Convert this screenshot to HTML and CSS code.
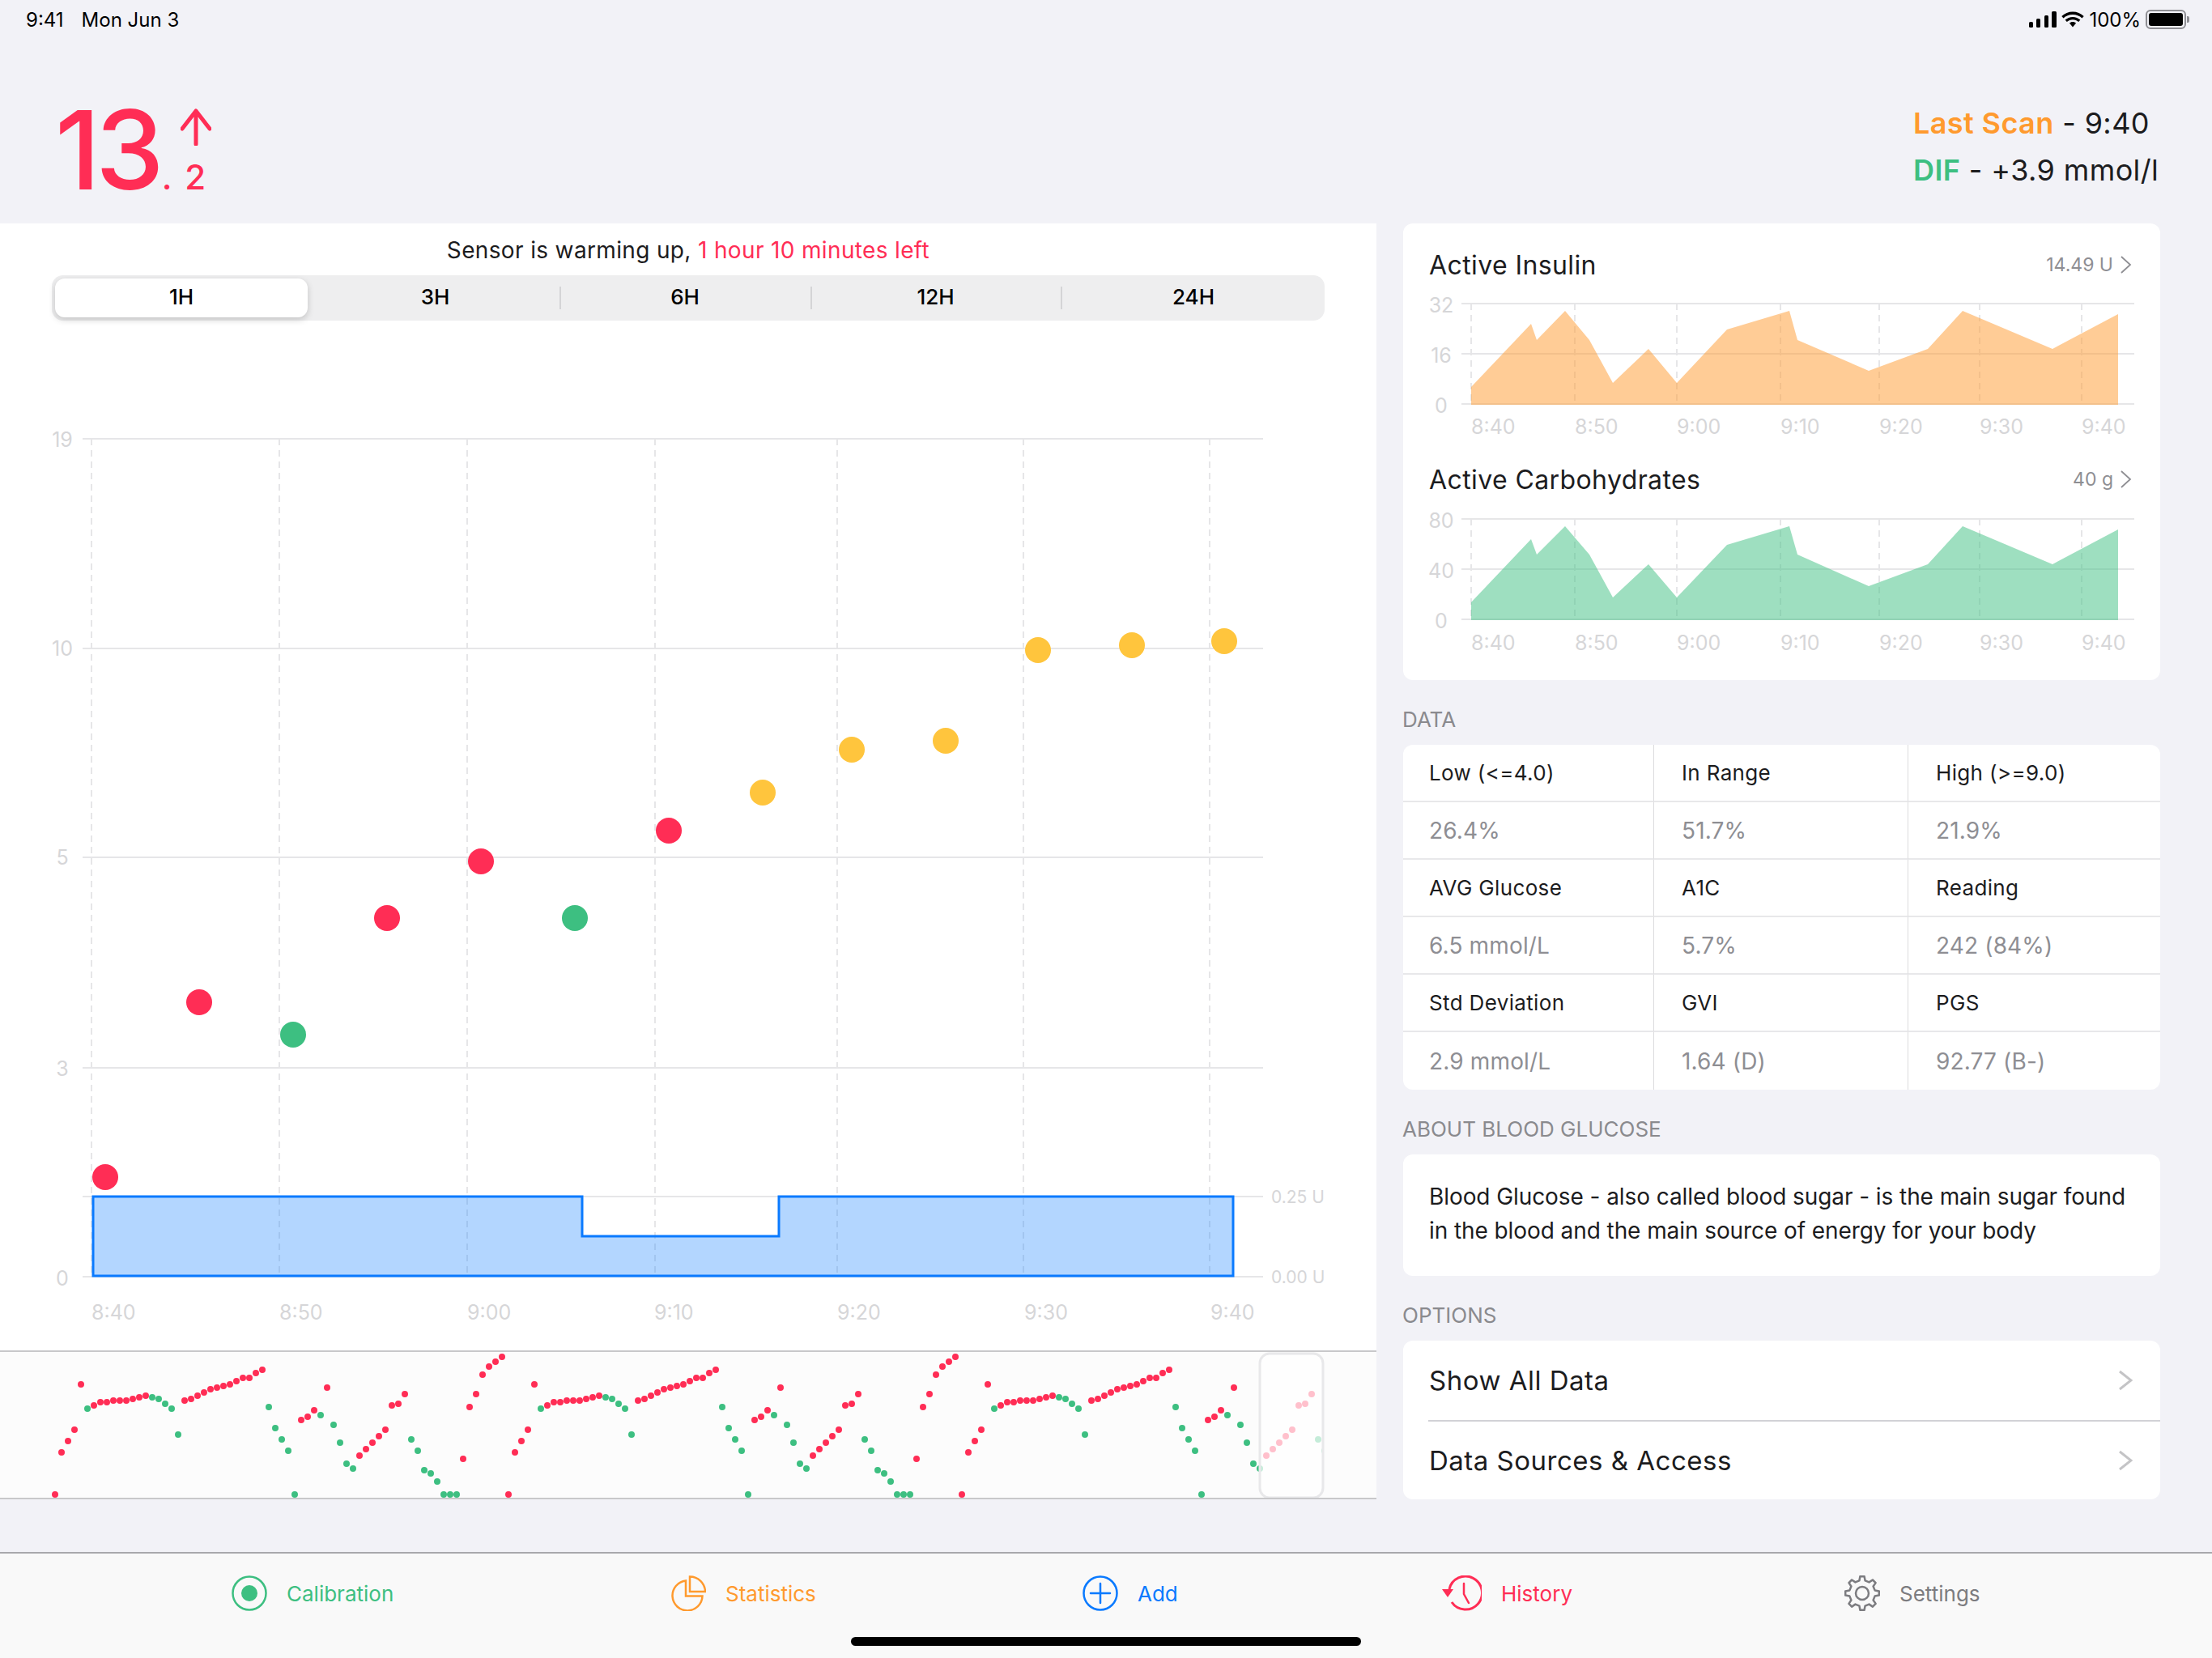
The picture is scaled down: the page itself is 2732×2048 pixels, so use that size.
FILE: index.html
```html
<!DOCTYPE html>
<html lang="en">
<head>
  <meta charset="UTF-8" />
  <title>Glucose</title>
  <link rel="stylesheet" href="styles.css">
</head>
<body>
  <div class="status-bar">
    <div class="status-left"><span>9:41</span><span>Mon Jun 3</span></div>
    <div class="status-right">
      <svg width="34" height="20" viewBox="0 0 34 20"><rect x="0" y="13" width="5" height="7" rx="1.5"/><rect x="9" y="9" width="5" height="11" rx="1.5"/><rect x="19" y="5" width="5" height="15" rx="1.5"/><rect x="28" y="0" width="6" height="20" rx="1.5"/></svg>
      <svg width="28" height="20" viewBox="0 0 28 20"><path d="M14 4C18.500 4 22.500 5.700 25.500 8.500L27.700 6.100C24 2.600 19.300.6 14 .6S4 2.600.3 6.100L2.500 8.500C5.500 5.700 9.500 4 14 4Z"/><path d="M14 10.200C16.800 10.200 19.300 11.300 21.200 13L23.400 10.600C20.900 8.300 17.600 6.900 14 6.900S7.100 8.300 4.600 10.600L6.800 13C8.700 11.300 11.200 10.200 14 10.200Z"/><path d="M14 13C12.400 13 11 13.600 9.900 14.600L14 19.500 18.100 14.600C17 13.600 15.600 13 14 13Z"/></svg>
      <span>100%</span>
      <div class="battery"><div class="battery-fill"></div></div>
    </div>
  </div>

  <header class="header">
    <div class="reading">
      <div class="reading-big">13</div>
      <div class="reading-side">
        <svg class="reading-arrow" width="38" height="46" viewBox="0 0 38 46"><path d="M19 44V3M2 25 19 3 36 25" fill="none" stroke="#ff2d55" stroke-width="5" stroke-linecap="round" stroke-linejoin="round"/></svg>
        <div class="reading-small">. 2</div>
      </div>
    </div>
    <div class="scan-info">
      <div><span class="scan-orange">Last Scan</span> - 9:40</div>
      <div><span class="scan-green">DIF</span> - +3.9 mmol/l</div>
    </div>
  </header>

  <div class="columns">
    <main class="left-col">
      <div class="chart-panel">
        <p class="sensor-note">Sensor is warming up, <span class="red">1 hour 10 minutes left</span></p>
        <div class="segments">
          <div class="segment active">1H</div>
          <div class="segment">3H</div>
          <div class="segment divided">6H</div>
          <div class="segment divided">12H</div>
          <div class="segment divided">24H</div>
        </div>
        <!-- viewBox is in page pixels so the numbers read off the design directly -->
        <svg class="main-chart" viewBox="0 396 1700 1272">
          <g class="grid">
            <path d="M102 542H1560M102 801H1560M102 1059H1560M102 1319H1560M102 1478H1560M102 1577H1560"/>
          </g>
          <g class="grid-dash">
            <path d="M113 542V1577M345 542V1577M577 542V1577M809 542V1577M1034 542V1577M1264 542V1577M1494 542V1577"/>
          </g>
          <path class="basal" d="M115 1478H719V1527H962V1478H1523V1576H115Z"/>
          <g class="axis-label" text-anchor="middle">
            <text x="77" y="552">19</text>
            <text x="77" y="810">10</text>
            <text x="77" y="1068">5</text>
            <text x="77" y="1329">3</text>
            <text x="77" y="1588">0</text>
          </g>
          <g class="axis-label">
            <text x="113" y="1630">8:40</text>
            <text x="345" y="1630">8:50</text>
            <text x="577" y="1630">9:00</text>
            <text x="808" y="1630">9:10</text>
            <text x="1034" y="1630">9:20</text>
            <text x="1265" y="1630">9:30</text>
            <text x="1495" y="1630">9:40</text>
          </g>
          <g class="axis-label small">
            <text x="1570" y="1486">0.25 U</text>
            <text x="1570" y="1585">0.00 U</text>
          </g>
          <g class="dots-red">
            <circle cx="130" cy="1454" r="16"/><circle cx="246" cy="1238" r="16"/><circle cx="478" cy="1134" r="16"/><circle cx="594" cy="1064" r="16"/><circle cx="826" cy="1026" r="16"/>
          </g>
          <g class="dots-green">
            <circle cx="362" cy="1278" r="16"/><circle cx="710" cy="1134" r="16"/>
          </g>
          <g class="dots-yellow">
            <circle cx="942" cy="979" r="16"/><circle cx="1052" cy="926" r="16"/><circle cx="1168" cy="915" r="16"/><circle cx="1282" cy="803" r="16"/><circle cx="1398" cy="797" r="16"/><circle cx="1512" cy="792" r="16"/>
          </g>
        </svg>
      </div>
      <div class="overview">
        <svg class="overview-chart" viewBox="0 1 1700 180">
          <defs>
            <clipPath id="overviewClip"><rect x="0" y="0" width="1633" height="182"/></clipPath>
            <g id="overviewPeriod">
              <path class="mini-green" d="M108 71h0M188 57h0M196 59h0M204 65h0M212 71h0M220 103h0M332 69h0M340 95h0M348 109h0M356 123h0M364 177h0M396 79h0M412 91h0M420 113h0M428 139h0M436 145h0M508 109h0M516 123h0M524 147h0M532 151h0M540 161h0M548 177h0M556 177h0M564 177h0"/>
              <path class="mini-red" d="M68 177h0M76 125h0M84 111h0M92 97h0M100 41h0M116 67h0M124 63h0M132 63h0M140 61h0M148 61h0M156 61h0M164 59h0M172 57h0M180 55h0M228 61h0M236 59h0M244 55h0M252 51h0M260 47h0M268 45h0M276 43h0M284 41h0M292 37h0M300 33h0M308 33h0M316 27h0M324 23h0M372 85h0M380 81h0M388 73h0M404 45h0M444 129h0M452 121h0M460 113h0M468 105h0M476 97h0M484 67h0M492 65h0M500 53h0M572 133h0M580 69h0M588 53h0M596 29h0M604 19h0M612 13h0M620 7h0"/>
            </g>
          </defs>
          <g clip-path="url(#overviewClip)">
            <use href="#overviewPeriod"/>
            <use href="#overviewPeriod" x="560"/>
            <use href="#overviewPeriod" x="1120"/>
          </g>
          <rect class="overview-window" x="1556" y="3" width="78" height="178" rx="12"/>
        </svg>
      </div>
    </main>

    <aside class="right-col">
      <section class="card trends">
        <div class="trend-head">
          <h3>Active Insulin</h3>
          <div class="trend-value">14.49 U <svg width="14" height="24" viewBox="0 0 14 24"><path d="M1 2 12 12 1 22" fill="none" stroke="#8e8e93" stroke-width="1.800"/></svg></div>
        </div>
        <svg class="trend-chart" viewBox="1733 360 935 185">
          <path class="grid" d="M1805 375H2636M1805 437H2636M1805 499H2636"/>
          <path class="grid-dash" d="M1817 375V499M1945 375V499M2071 375V499M2199 375V499M2321 375V499M2445 375V499M2571 375V499"/>
          <path class="area-orange" d="M1817 478 1891 400 1898 420 1933 384 1963 420 1992 473 2036 431 2071 473 2133 407 2210 384 2220 420 2308 458 2381 431 2424 384 2535 431 2616 388V500H1817Z"/>
          <g class="axis-label" text-anchor="middle">
            <text x="1780" y="386">32</text>
            <text x="1780" y="448">16</text>
            <text x="1780" y="510">0</text>
          </g>
          <g class="axis-label">
            <text x="1817" y="536">8:40</text>
            <text x="1945" y="536">8:50</text>
            <text x="2071" y="536">9:00</text>
            <text x="2199" y="536">9:10</text>
            <text x="2321" y="536">9:20</text>
            <text x="2445" y="536">9:30</text>
            <text x="2571" y="536">9:40</text>
          </g>
        </svg>
        <div class="trend-head second">
          <h3>Active Carbohydrates</h3>
          <div class="trend-value">40 g <svg width="14" height="24" viewBox="0 0 14 24"><path d="M1 2 12 12 1 22" fill="none" stroke="#8e8e93" stroke-width="1.800"/></svg></div>
        </div>
        <svg class="trend-chart" viewBox="1733 625 935 185">
          <path class="grid" d="M1805 641H2636M1805 703H2636M1805 765H2636"/>
          <path class="grid-dash" d="M1817 641V765M1945 641V765M2071 641V765M2199 641V765M2321 641V765M2445 641V765M2571 641V765"/>
          <path class="area-green" d="M1817 744 1891 666 1898 685 1933 650 1963 685 1992 738 2036 697 2071 738 2133 673 2210 650 2220 685 2308 724 2381 697 2424 650 2535 697 2616 654V766H1817Z"/>
          <g class="axis-label" text-anchor="middle">
            <text x="1780" y="652">80</text>
            <text x="1780" y="714">40</text>
            <text x="1780" y="776">0</text>
          </g>
          <g class="axis-label">
            <text x="1817" y="803">8:40</text>
            <text x="1945" y="803">8:50</text>
            <text x="2071" y="803">9:00</text>
            <text x="2199" y="803">9:10</text>
            <text x="2321" y="803">9:20</text>
            <text x="2445" y="803">9:30</text>
            <text x="2571" y="803">9:40</text>
          </g>
        </svg>
      </section>

      <h4 class="section-title">Data</h4>
      <table class="card data-table">
        <tr><th>Low (&lt;=4.0)</th><th>In Range</th><th>High (&gt;=9.0)</th></tr>
        <tr><td>26.4%</td><td>51.7%</td><td>21.9%</td></tr>
        <tr><th>AVG Glucose</th><th>A1C</th><th>Reading</th></tr>
        <tr><td>6.5 mmol/L</td><td>5.7%</td><td>242 (84%)</td></tr>
        <tr><th>Std Deviation</th><th>GVI</th><th>PGS</th></tr>
        <tr><td>2.9 mmol/L</td><td>1.64 (D)</td><td>92.77 (B-)</td></tr>
      </table>

      <h4 class="section-title">About Blood Glucose</h4>
      <div class="card about">Blood Glucose - also called blood sugar - is the main sugar found in the blood and the main source of energy for your body</div>

      <h4 class="section-title">Options</h4>
      <div class="card options">
        <div class="option">Show All Data <svg width="18" height="26" viewBox="0 0 18 26"><path d="M2 2 16 13 2 24" fill="none" stroke="#c4c4c6" stroke-width="3"/></svg></div>
        <div class="option">Data Sources &amp; Access <svg width="18" height="26" viewBox="0 0 18 26"><path d="M2 2 16 13 2 24" fill="none" stroke="#c4c4c6" stroke-width="3"/></svg></div>
      </div>
    </aside>
  </div>

  <nav class="tab-bar">
    <a href="#" class="tab tab-green">
      <svg width="44" height="44" viewBox="0 0 44 44"><circle cx="22" cy="22" r="20.500" fill="none" stroke="currentColor" stroke-width="2.500"/><circle cx="22" cy="22" r="10" fill="currentColor"/></svg>
      Calibration
    </a>
    <a href="#" class="tab tab-orange">
      <svg width="44" height="44" viewBox="0 0 44 44" fill="none" stroke="currentColor" stroke-width="2.500"><path d="M19 6.500A18.500 18.500 0 1 0 39.500 25.500H19Z"/><path d="M24 1.500A19 19 0 0 1 43 20H24Z"/></svg>
      Statistics
    </a>
    <a href="#" class="tab tab-blue">
      <svg width="44" height="44" viewBox="0 0 44 44" fill="none" stroke="currentColor" stroke-width="2.500"><circle cx="22" cy="22" r="20.500"/><path d="M22 10V34M10 22H34" stroke-linecap="round"/></svg>
      Add
    </a>
    <a href="#" class="tab tab-red">
      <svg width="50" height="44" viewBox="0 0 50 44" fill="none" stroke="currentColor" stroke-width="3"><path d="M10 17A20.500 20.500 0 1 1 13 33"/><path d="M28 10V23L34 34" stroke-width="2.500" stroke-linecap="round"/><path d="M1 17H15L8 27Z" fill="currentColor" stroke="none"/></svg>
      History
    </a>
    <a href="#" class="tab tab-grey">
      <svg width="44" height="44" viewBox="0 0 44 44" fill="none" stroke="currentColor" stroke-width="2.500" stroke-linejoin="round"><path d="M24.600 1.200 25.600 6.400 30.500 8.400 34.900 5.500 38.600 9.100 35.600 13.500 37.600 18.400 42.800 19.400V24.600L37.600 25.600 35.600 30.500 38.600 34.900 34.900 38.600 30.500 35.600 25.600 37.600 24.600 42.800H19.400L18.400 37.600 13.500 35.600 9.100 38.600 5.500 34.900 8.400 30.500 6.400 25.600 1.200 24.600V19.400L6.400 18.400 8.400 13.500 5.500 9.100 9.100 5.500 13.500 8.400 18.400 6.400 19.400 1.200Z"/><circle cx="22" cy="22" r="8"/></svg>
      Settings
    </a>
  </nav>
  <div class="home-indicator"></div>
</body>
</html>
```

FILE: styles.css
```css
/* Reset */
* {
  box-sizing: border-box;
  margin: 0;
  padding: 0;
}
body {
  background-color: #f2f2f7;
  color: #1c1c1e;
  font-family: Inter, 'Noto Sans', sans-serif;
  width: 2732px;
  height: 2048px;
  position: relative;
  overflow: hidden;
}
a {
  color: inherit;
  text-decoration: none;
}

/* Status bar */
.status-bar {
  height: 48px;
  display: flex;
  justify-content: space-between;
  align-items: center;
  padding: 0 32px;
  font-size: 24px;
  color: #000;
}
.status-left {
  display: flex;
  gap: 22px;
}
.status-right {
  display: flex;
  align-items: center;
  gap: 6px;
}
.battery {
  width: 50px;
  height: 24px;
  border: 2px solid #8e8e93;
  border-radius: 6px;
  padding: 2px;
  position: relative;
}
.battery-fill {
  background-color: #000;
  border-radius: 3px;
  height: 100%;
}
.battery::after {
  content: '';
  position: absolute;
  right: -6px;
  top: 6px;
  width: 3px;
  height: 8px;
  background-color: #8e8e93;
  border-radius: 0 2px 2px 0;
}

/* Header */
.header {
  height: 228px;
  display: flex;
  justify-content: space-between;
  padding: 0 64px 0 68px;
  position: relative;
}
.reading {
  display: flex;
  color: #ff2d55;
  padding-top: 62px;
}
.reading-big {
  font-size: 135px;
  font-weight: 500;
  line-height: 150px;
  letter-spacing: -6px;
}
.reading-side {
  display: flex;
  flex-direction: column;
  align-items: flex-end;
  margin-left: 3px;
  padding-top: 24px;
}
.reading-arrow {
  margin-right: -7px;
}
.reading-small {
  font-size: 42px;
  font-weight: 500;
  line-height: 50px;
  margin-top: 14px;
  word-spacing: 5px;
}
.scan-info {
  font-size: 36px;
  line-height: 58px;
  padding-top: 75px;
  width: 305px;
  letter-spacing: 0.4px;
}
.scan-orange {
  color: #ff9a2e;
  font-weight: 600;
}
.scan-green {
  color: #3dbf81;
  font-weight: 600;
}

/* Columns */
.columns {
  display: flex;
  gap: 33px;
}
.left-col {
  width: 1700px;
}
.right-col {
  width: 935px;
}

/* Main chart panel */
.chart-panel {
  background-color: #fff;
  height: 1392px;
  display: flex;
  flex-direction: column;
}
.sensor-note {
  font-size: 28px;
  text-align: center;
  height: 64px;
  line-height: 66px;
  letter-spacing: 0.35px;
}
.red {
  color: #ff2d55;
}
.segments {
  display: grid;
  grid-template-columns: 312px 311px 310px 309px 1fr;
  width: 1572px;
  height: 56px;
  margin-left: 64px;
  background-color: #eeeeef;
  border-radius: 14px;
  padding: 4px;
}
.segment {
  display: flex;
  align-items: center;
  justify-content: center;
  font-size: 26px;
  font-weight: 450;
  color: #000;
  position: relative;
  padding-bottom: 4px;
}
.segment:nth-child(2) {
  padding-left: 4px;
}
.segment:last-child {
  padding-left: 6px;
}
.segment.active {
  background-color: #fff;
  border-radius: 12px;
  box-shadow: 0 3px 8px rgba(0, 0, 0, 0.18);
}
.segment.divided::before {
  content: '';
  position: absolute;
  left: 0;
  top: 10px;
  bottom: 10px;
  width: 2px;
  background-color: #d4d4d6;
}
.main-chart {
  display: block;
  width: 1700px;
  height: 1272px;
}

/* Chart bits */
.grid {
  fill: none;
  stroke: #e6e6e8;
  stroke-width: 2;
}
.grid-dash {
  fill: none;
  stroke: #e6e6e8;
  stroke-width: 2;
  stroke-dasharray: 8 6;
}
.axis-label text {
  font-size: 25px;
  fill: #d6d6d8;
}
.axis-label.small text {
  font-size: 21px;
}
.basal {
  fill: #0a7aff;
  fill-opacity: 0.31;
  stroke: #0a7aff;
  stroke-width: 3;
}
.dots-red {
  fill: #ff2d55;
}
.dots-green {
  fill: #3dbf81;
}
.dots-yellow {
  fill: #ffc53d;
}
.area-orange {
  fill: #ff9a2e;
  fill-opacity: 0.5;
}
.area-green {
  fill: #3dbf81;
  fill-opacity: 0.5;
}

/* Overview strip */
.overview {
  height: 184px;
  background-color: #fcfcfc;
  border-top: 2px solid #c8c8ca;
  border-bottom: 2px solid #c8c8ca;
}
.overview-chart {
  display: block;
  width: 1700px;
  height: 180px;
}
.mini-red,
.mini-green {
  fill: none;
  stroke-width: 8;
  stroke-linecap: round;
}
.mini-red {
  stroke: #ff2d55;
}
.mini-green {
  stroke: #3dbf81;
}
.overview-window {
  fill: #fff;
  fill-opacity: 0.7;
  stroke: #e8e8ea;
  stroke-width: 3;
}

/* Right column */
.card {
  background-color: #fff;
  border-radius: 12px;
}
.trends {
  height: 564px;
}
.trend-head {
  height: 84px;
  display: flex;
  justify-content: space-between;
  align-items: center;
  padding: 18px 35px 0 32px;
}
.trend-head.second {
  height: 80px;
  padding-top: 14px;
}
.trend-head h3 {
  font-size: 32px;
  font-weight: 400;
  letter-spacing: 0.4px;
}
.trend-value {
  display: flex;
  align-items: center;
  gap: 9px;
  font-size: 23px;
  color: #8e8e93;
}
.trend-chart {
  display: block;
  width: 935px;
  height: 185px;
}
.section-title {
  font-size: 26px;
  font-weight: 400;
  text-transform: uppercase;
  color: #8a8a8e;
  height: 80px;
  line-height: 28px;
  padding-top: 35px;
  margin-left: -1px;
}

/* Data table */
.data-table {
  width: 935px;
  border-spacing: 0;
  border-collapse: separate;
  table-layout: fixed;
}
.data-table th,
.data-table td {
  height: 71px;
  text-align: left;
  padding-left: 32px;
  border-bottom: 2px solid #e8e8ea;
  border-right: 1px solid #dcdcde;
  font-weight: 400;
}
.data-table th {
  font-size: 26px;
  letter-spacing: 0.35px;
  color: #1c1c1e;
}
.data-table td {
  font-size: 28px;
  letter-spacing: 0.15px;
  color: #8e8e93;
}
.data-table tr:last-child td {
  border-bottom: none;
}
.data-table tr > :last-child {
  border-right: none;
}
.data-table tr > :first-child {
  width: 310px;
}
.data-table tr > :nth-child(2) {
  width: 314px;
}
.data-table tr > :nth-child(n+2) {
  padding-left: 34px;
}

/* About */
.about {
  height: 150px;
  padding: 31px 32px;
  font-size: 28px;
  line-height: 42px;
  letter-spacing: -0.08px;
}

/* Options */
.options {
  height: 196px;
  padding-left: 31px;
}
.option {
  height: 98px;
  display: flex;
  align-items: center;
  justify-content: space-between;
  padding: 0 34px 0 1px;
  font-size: 33px;
  letter-spacing: 0.5px;
}
.option + .option {
  border-top: 2px solid #d2d2d6;
}

/* Tab bar */
.tab-bar {
  position: absolute;
  left: 0;
  right: 0;
  bottom: 0;
  height: 131px;
  background-color: #f9f9f9;
  border-top: 2px solid #a9a9ad;
  display: grid;
  grid-template-columns: 542px 509px 443px 498px 1fr;
  padding: 27px 0 0 286px;
  align-items: start;
}
.tab {
  display: flex;
  align-items: center;
  gap: 24px;
  font-size: 26px;
}
.tab-green { color: #3dbf81; }
.tab-orange { color: #ff9a2e; }
.tab-blue { color: #0a7aff; }
.tab-red { color: #ff2d55; }
.tab-grey { color: #7c7c80; }
.home-indicator {
  position: absolute;
  left: 1051px;
  top: 2022px;
  width: 630px;
  height: 11px;
  background-color: #000;
  border-radius: 6px;
}
```
